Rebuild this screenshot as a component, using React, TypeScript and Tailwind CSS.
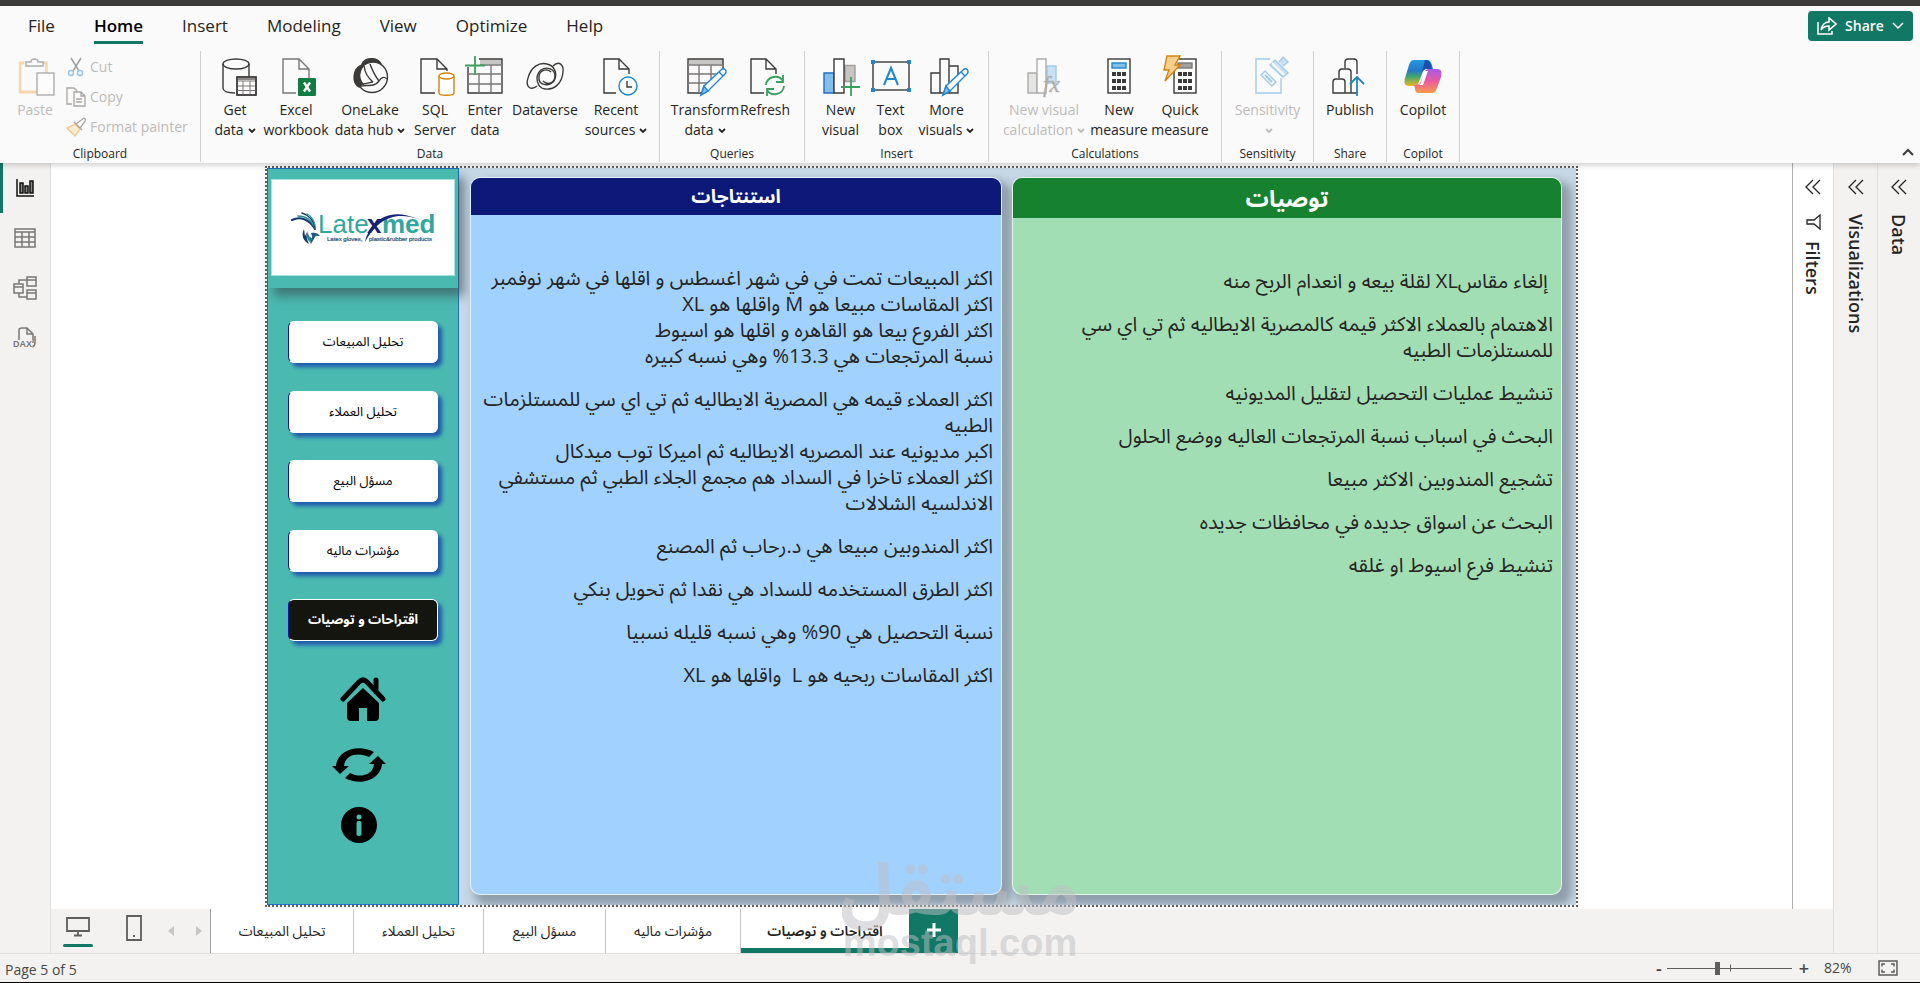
import type { ReactNode } from "react";
import { clsx } from "clsx";

const INK = "#3b3a39";
const BLUE = "#2086cf";
const GREEN = "#38a05c";

/* ---------- Ribbon icons ---------- */

function Icon({ children, faded = false }: { children: ReactNode; faded?: boolean }) {
    return (
        <svg
            viewBox="0 0 40 40"
            className={clsx("h-10 w-10 shrink-0 overflow-visible", faded && "opacity-40")}
            fill="none"
            stroke={INK}
            strokeWidth="1.4"
            aria-hidden="true"
        >
            {children}
        </svg>
    );
}

function Pencil() {
    return (
        <g stroke={BLUE}>
            <path d="M16 39l3-9 17-16c3-3 7 1 4 4L23 35z" fill="#fafafa" />
            <path d="M16 39l3-9 4 5z" fill="#83beec" />
            <path d="M34 16l4 4" />
        </g>
    );
}

function Bars() {
    return <path d="M4 37V17h9v20zM13 37V3h9v34zM22 10h9v27h-9" />;
}

function CalcBody({ x = 9, tone = "#83beec", line = BLUE }: { x?: number; tone?: string; line?: string }) {
    return (
        <g transform={`translate(${x} 0)`}>
            <rect x="0" y="3" width="22" height="34" fill="#fff" />
            <rect x="4" y="7" width="14" height="5" fill={tone} stroke={line} />
            {[16, 23, 30].map((y) =>
                [4, 9, 14].map((cx) => (
                    <rect key={`${cx}-${y}`} x={cx} y={y} width="4" height="4" fill={INK} stroke="none" />
                )),
            )}
        </g>
    );
}

const icons = {
    getData: (
        <Icon>
            <path d="M20 37c-8 0-12-2-12-5V8M34 8v13" />
            <ellipse cx="21" cy="8" rx="13" ry="5" />
            <rect x="22" y="21" width="19" height="18" fill="#fff" />
            <path d="M22 22.500h19" stroke="#8a8886" strokeWidth="3" />
            <path d="M22 25h19M22 30h19M22 34.500h19M28 25v14M35 25v14" stroke="#797775" strokeWidth="1" />
            <rect x="22" y="21" width="19" height="18" />
        </Icon>
    ),
    excel: (
        <Icon>
            <path d="M20 37H7V3h16l10 10v9M23 3v10h10" stroke="#797775" />
            <rect x="22" y="22" width="18" height="18" rx="1" fill="#107c41" stroke="none" />
            <path d="M28 26.500l6 9M34 26.500l-6 9" stroke="#fff" strokeWidth="2.400" />
        </Icon>
    ),
    oneLake: (
        <Icon>
            <circle cx="22" cy="21" r="15.500" />
            <path d="M12 8C15 1 28 1 31 8c-5-3-13-3-18 2z" fill={INK} />
            <path d="M12 9C2 13 2 27 9 31c2-2 3-3 4-3-5-6-4-13 0-18z" fill={INK} />
            <path d="M14 10c1 7 4 12 9 16M20 8c3 8 5 12 9 17M9 31c7-4 14 2 20-6 3-5 6-4 8-2M13 28c4 0 7-2 10-2" />
        </Icon>
    ),
    sql: (
        <Icon>
            <path d="M20 37H6V3h16l10 10v2M22 3v10h10" />
            <g stroke="#d2830d">
                <path d="M24 20v17c0 3 15 3 15 0V20" fill="#fff" />
                <ellipse cx="31.500" cy="20" rx="7.500" ry="3" fill="#fff" />
            </g>
        </Icon>
    ),
    enter: (
        <Icon>
            <path d="M15 6h22" stroke="#c8c6c4" strokeWidth="5" />
            <path d="M3 11v26h34V3H14" />
            <path d="M15 9h22M3 18h34M3 28h34M14 17v20M26 9v28" stroke="#797775" />
            <path d="M10 0v19M0 9.500h20" stroke={GREEN} strokeWidth="1.800" />
        </Icon>
    ),
    dataverse: (
        <Icon>
            <path d="M28 10c6-6 11-1 10 6-1 12-9 18-18 17-8-1-11-13-4-19 6-4 14-1 14 6s-7 10-12 5" />
            <path d="M12 30c-6 5-12 1-9-8C6 11 14 6 22 8c9 2 11 12 6 18-5 5-15 3-14-5 0-7 8-9 12-5" />
        </Icon>
    ),
    recent: (
        <Icon>
            <path d="M20 37H8V3h15l10 10v5M23 3v10h10" />
            <circle cx="32" cy="30" r="9" stroke={BLUE} fill="#fff" />
            <path d="M31 25v6h5" />
        </Icon>
    ),
    transform: (
        <Icon>
            <path d="M4 6h34" stroke="#c8c6c4" strokeWidth="5" />
            <path d="M18 37H3V3h35v11" />
            <path d="M3 9h35M3 18h28M3 27h20M14 9v28M26 9v14" stroke="#797775" />
            <Pencil />
        </Icon>
    ),
    refresh: (
        <Icon>
            <path d="M19 37H6V3h15l10 10v5M21 3v10h10" />
            <g stroke={GREEN} strokeWidth="1.800">
                <path d="M21 29c1-9 13-11 17-4M38 19v7h-7" />
                <path d="M39 30c-1 9-13 11-17 4M22 40v-7h7" />
            </g>
        </Icon>
    ),
    newVisual: (
        <Icon>
            <path d="M24 9.500h10v16h-10z" fill="#c8c6c4" stroke="#a19f9d" />
            <path d="M3 17h10v20H3z" fill="#83beec" stroke="#1f6fbf" />
            <path d="M13 3h10v34H13z" fill="#fff" />
            <path d="M30 21v19M20 31h19" stroke={GREEN} strokeWidth="1.800" />
        </Icon>
    ),
    textBox: (
        <Icon>
            <rect x="2" y="6" width="36" height="28" />
            <g fill={BLUE} stroke="none">
                <path d="M0 4h4v4H0zM36 4h4v4h-4zM0 32h4v4H0zM36 32h4v4h-4z" />
            </g>
            <path d="M13 29l7-17 7 17M15.500 23h9" stroke={BLUE} strokeWidth="2" />
        </Icon>
    ),
    moreVisuals: (
        <Icon>
            <Bars />
            <Pencil />
        </Icon>
    ),
    newCalc: (
        <Icon faded>
            <path d="M23 10h9v17h-9z" fill="#83beec" stroke={BLUE} />
            <path d="M4 17h9v20H4z" fill="#c8c6c4" />
            <path d="M13 3h9v34h-9z" fill="#fff" />
            <text x="19" y="36" fontSize="23" fontStyle="italic" fontFamily="Liberation Serif" fill={INK} strokeWidth=".4">
                fx
            </text>
        </Icon>
    ),
    newMeasure: (
        <Icon>
            <CalcBody />
        </Icon>
    ),
    quick: (
        <Icon>
            <CalcBody x={14} tone="#a19f9d" line="#797775" />
            <path d="M7 0h13l-5 9h5L5 25l4-11H4z" fill="#fbcf8e" stroke="#d2830d" />
        </Icon>
    ),
    sensitivity: (
        <Icon faded>
            <g stroke={BLUE}>
                <path d="M22 3H8v34h25V22" />
                <path d="M13 19l4-4 11 11-4 4z" />
                <path d="M17 19l7 7" strokeWidth="2" />
                <path d="M22 9l5-5 13 13-5 4zM31 6l4-5 5 5-5 4" fill="#83beec" />
                <path d="M24 7l12 12" stroke="#fff" strokeWidth="2" />
            </g>
        </Icon>
    ),
    publish: (
        <Icon>
            <path d="M27 37H3V26q0-3 3-3h6q3 0 3 3v11M9 22v-6q0-3 3-3h6q3 0 3 3v21M15 12V6q0-3 3-3h6q3 0 3 3v12" />
            <path d="M27 40V22M20 28l7-7 7 7" stroke="#1f84bd" strokeWidth="1.800" />
        </Icon>
    ),
    copilot: (
        <svg viewBox="0 0 40 40" className="h-10 w-10 shrink-0" aria-hidden="true">
            <defs>
                <linearGradient id="copilotCool" x1="0" y1="0" x2="0" y2="1">
                    <stop offset="0" stopColor="#1f9be0" />
                    <stop offset=".4" stopColor="#2678c9" />
                    <stop offset=".65" stopColor="#43a86b" />
                    <stop offset="1" stopColor="#f0b429" />
                </linearGradient>
                <linearGradient id="copilotWarm" x1="0" y1="0" x2="0" y2="1">
                    <stop offset="0" stopColor="#a45be8" />
                    <stop offset=".5" stopColor="#ea5aa0" />
                    <stop offset="1" stopColor="#f79b4b" />
                </linearGradient>
            </defs>
            <path d="M11 4h13c3 0 4 2 5 5l1 4h-6c-3 0-4 2-5 5l-3 8c-1 3-3 4-6 4H6c-5 0-5-4-4-8L6 9c1-3 2-5 5-5z" fill="url(#copilotCool)" />
            <path d="M22 4c4 0 5 2 6 5l1 4h-6c-2 0-3 1-4 3z" fill="#1d4fb0" />
            <path d="M29 37H16c-3 0-4-2-4-5l-1-3c4 0 6-1 7-4l3-8c1-3 3-4 5-4h8c5 0 5 4 4 8l-4 11c-1 3-2 5-5 5z" fill="url(#copilotWarm)" />
            <path d="M21 15h4l-5 14h-5c3 0 3-3 4-7z" fill="#fff" />
        </svg>
    ),
};

/* ---------- Ribbon ---------- */

function Caret() {
    return (
        <svg viewBox="0 0 8 6" className="ml-1 inline h-[6px] w-2" fill="none" stroke="currentColor" strokeWidth="1.800" aria-hidden="true">
            <path d="M1 1l3 3 3-3" />
        </svg>
    );
}

type ToolProps = {
    icon: ReactNode;
    lines: string[];
    width: string;
    caret?: boolean;
    disabled?: boolean;
};

function Tool({ icon, lines, width, caret = false, disabled = false }: ToolProps) {
    return (
        <button
            type="button"
            disabled={disabled}
            className={clsx("flex shrink-0 flex-col items-center", width, disabled ? "text-[#bebbb8]" : "text-[#252423]")}
        >
            {icon}
            <span className="mt-1 text-sm leading-5 whitespace-nowrap">
                {lines.map((line, i) => (
                    <span key={i} className="block">
                        {line}
                        {caret && i === lines.length - 1 && <Caret />}
                    </span>
                ))}
            </span>
        </button>
    );
}

function Group({ label, width, children }: { label: string; width: string; children: ReactNode }) {
    return (
        <section className={clsx("flex shrink-0 flex-col border-r border-[#d2d0ce]", width)}>
            <div className="flex min-h-0 flex-1 justify-center pt-[5px]">{children}</div>
            <h2 className="text-center text-xs leading-4 text-[#252423]">{label}</h2>
        </section>
    );
}

function ClipboardTools() {
    return (
        <div className="flex flex-1 items-start text-[#bebbb8]">
            <button type="button" disabled className="ml-3 flex w-[46px] flex-col items-center">
                <Icon faded>
                    <path d="M11 7H6v29h31V7h-5" stroke="#f0a13c" strokeWidth="3" transform="scale(.85 1)" />
                    <path d="M11 10V6h5c0-4 7-4 7 0h5v4z" fill="#fff" />
                    <rect x="22" y="17" width="17" height="22" fill="#fff" />
                </Icon>
                <span className="mt-1 text-sm leading-5">Paste</span>
            </button>
            <ul className="-mt-1 ml-2 flex flex-col text-sm leading-[30px]">
                <li>
                    <button type="button" disabled className="flex items-center gap-1">
                        <svg viewBox="0 0 20 20" className="h-5 w-5" fill="none" stroke="#a19f9d" strokeWidth="1.500" aria-hidden="true">
                            <path d="M5 1l8 13M15 1L7 14" />
                            <circle cx="5" cy="16" r="2.500" stroke="#9cc6e8" />
                            <circle cx="14" cy="16" r="2.500" stroke="#9cc6e8" />
                        </svg>
                        Cut
                    </button>
                </li>
                <li>
                    <button type="button" disabled className="flex items-center gap-1">
                        <svg viewBox="0 0 20 20" className="h-5 w-5" fill="none" stroke="#a8a6a4" strokeWidth="1.300" aria-hidden="true">
                            <path d="M6 17H1V1h7l3 3M8 5h7l4 4v10H8zM15 5v4h4M10 12h6M10 15h6" />
                        </svg>
                        Copy
                    </button>
                </li>
                <li>
                    <button type="button" disabled className="flex items-center gap-1 whitespace-nowrap">
                        <svg viewBox="0 0 20 20" className="h-5 w-5" fill="none" stroke="#a8a6a4" strokeWidth="1.300" aria-hidden="true">
                            <path d="M1 11l8-4 5 5-5 7z" fill="#fdebcf" stroke="#f2c48d" />
                            <path d="M8 5l8 8M10 7l8-6 2 2-6 8" />
                        </svg>
                        Format painter
                    </button>
                </li>
            </ul>
        </div>
    );
}

const menu = ["File", "Home", "Insert", "Modeling", "View", "Optimize", "Help"];

function Header() {
    return (
        <header className="relative z-10 bg-[#fafafa] shadow-[0_2px_6px_rgba(0,0,0,0.2)]">
            <div className="h-[6px] bg-[#3b3a39]" />
            <div className="flex h-[45px] items-start justify-between">
                <nav className="flex gap-[39px] pl-7">
                    {menu.map((item) => (
                        <a
                            key={item}
                            href="#"
                            className={clsx(
                                "flex h-[38px] items-center border-b-[3px] pt-1 text-[17px]",
                                item === "Home"
                                    ? "border-[#117865] font-semibold text-black"
                                    : "border-transparent text-[#252423]",
                            )}
                        >
                            {item}
                        </a>
                    ))}
                </nav>
                <button
                    type="button"
                    className="mt-[5px] mr-[7px] flex h-[30px] w-[105px] items-center justify-between rounded-[4px] bg-[#117865] px-[9px] text-sm font-semibold text-white"
                >
                    <svg viewBox="0 0 20 18" className="h-[18px] w-5" fill="none" stroke="currentColor" strokeWidth="1.500" aria-hidden="true">
                        <path d="M1 5v12h14v-3" />
                        <path d="M4 13c1-5 4-8 8-8V1l7 6-7 6V9c-4 0-6 1-8 4z" />
                    </svg>
                    Share
                    <svg viewBox="0 0 12 8" className="h-2 w-3" fill="none" stroke="currentColor" strokeWidth="1.500" aria-hidden="true">
                        <path d="M1 1l5 5 5-5" />
                    </svg>
                </button>
            </div>

            <div className="flex h-28 items-end justify-between">
                <div className="flex h-full pb-px">
                    <Group label="Clipboard" width="w-[201px]">
                        <ClipboardTools />
                    </Group>
                    <Group label="Data" width="w-[459px]">
                        <Tool icon={icons.getData} lines={["Get", "data"]} width="w-[52px]" caret />
                        <Tool icon={icons.excel} lines={["Excel", "workbook"]} width="w-[70px]" />
                        <Tool icon={icons.oneLake} lines={["OneLake", "data hub"]} width="w-[78px]" caret />
                        <Tool icon={icons.sql} lines={["SQL", "Server"]} width="w-[52px]" />
                        <Tool icon={icons.enter} lines={["Enter", "data"]} width="w-12" />
                        <Tool icon={icons.dataverse} lines={["Dataverse"]} width="w-[72px]" />
                        <Tool icon={icons.recent} lines={["Recent", "sources"]} width="w-[70px]" caret />
                    </Group>
                    <Group label="Queries" width="w-[145px]">
                        <Tool icon={icons.transform} lines={["Transform", "data"]} width="w-[66px]" caret />
                        <Tool icon={icons.refresh} lines={["Refresh"]} width="w-[54px]" />
                    </Group>
                    <Group label="Insert" width="w-[184px]">
                        <Tool icon={icons.newVisual} lines={["New", "visual"]} width="w-12" />
                        <Tool icon={icons.textBox} lines={["Text", "box"]} width="w-[52px]" />
                        <Tool icon={icons.moreVisuals} lines={["More", "visuals"]} width="w-[60px]" caret />
                    </Group>
                    <Group label="Calculations" width="w-[233px]">
                        <Tool icon={icons.newCalc} lines={["New visual", "calculation"]} width="w-[90px]" caret disabled />
                        <Tool icon={icons.newMeasure} lines={["New", "measure"]} width="w-[60px]" />
                        <Tool icon={icons.quick} lines={["Quick", "measure"]} width="w-[62px]" />
                    </Group>
                    <Group label="Sensitivity" width="w-[92px]">
                        <Tool icon={icons.sensitivity} lines={["Sensitivity", ""]} width="w-[70px]" caret disabled />
                    </Group>
                    <Group label="Share" width="w-[73px]">
                        <Tool icon={icons.publish} lines={["Publish"]} width="w-[60px]" />
                    </Group>
                    <Group label="Copilot" width="w-[73px]">
                        <Tool icon={icons.copilot} lines={["Copilot"]} width="w-[60px]" />
                    </Group>
                </div>
                <button type="button" aria-label="Collapse ribbon" className="mr-[6px] mb-[7px]">
                    <svg viewBox="0 0 12 8" className="h-2 w-3" fill="none" stroke={INK} strokeWidth="2" aria-hidden="true">
                        <path d="M1 7l5-5 5 5" />
                    </svg>
                </button>
            </div>
        </header>
    );
}

/* ---------- View rail ---------- */

const views: { label: string; drawing: ReactNode }[] = [
    {
        label: "Report view",
        drawing: (
            <g stroke="#111">
                <path d="M4 3v17h17" />
                <path d="M7 7h3v10H7zM12 10h3v7h-3zM17 5h3v12h-3z" fill="#8a8886" />
            </g>
        ),
    },
    {
        label: "Table view",
        drawing: <path d="M2 3h20v18H2zM2 6h20M2 11h20M2 16h20M9 6v15M16 6v15" />,
    },
    {
        label: "Model view",
        drawing: <path d="M1 8h9v9H1zM14 1h9v9h-9zM14 14h9v9h-9zM1 11h9M14 4h9M14 17h9M6 8V4h8M6 17v4h8" />,
    },
    {
        label: "DAX query view",
        drawing: (
            <>
                <path d="M6 14V4q0-2 3-2h5l6 6v9M14 2v6h6M22 10v7q0 3-3 4" />
                <text x="0" y="21" fontSize="9" fontWeight="bold" fontFamily="Liberation Sans" fill="#797775" stroke="#f3f2f1" strokeWidth="1" paintOrder="stroke">
                    DAX
                </text>
            </>
        ),
    },
];

function ViewRail() {
    return (
        <nav className="flex w-[51px] shrink-0 flex-col border-r border-[#e1dfdd] bg-[#f3f2f1]">
            {views.map((view, i) => (
                <a
                    key={view.label}
                    href="#"
                    aria-label={view.label}
                    className={clsx(
                        "flex h-[50px] items-center border-l-[3px] pl-[10px]",
                        i === 0 ? "border-[#117865]" : "border-transparent",
                    )}
                >
                    <svg viewBox="0 0 24 24" className="h-6 w-6 overflow-visible" fill="none" stroke="#797775" strokeWidth="1.500" aria-hidden="true">
                        {view.drawing}
                    </svg>
                </a>
            ))}
        </nav>
    );
}

/* ---------- Report page ---------- */

function Logo() {
    return (
        <svg viewBox="0 0 150 40" className="h-10 w-[150px]" role="img" aria-label="Latexmed">
            {/* feathers */}
            <g fill="none" strokeLinecap="round">
                <path d="M4 12C12 8 21 11 27 21" stroke="#163a70" strokeWidth="2" />
                <path d="M10 8c8 0 14 5 17 12" stroke="#2a8f9b" strokeWidth="1.500" />
                <path d="M14 5c7 2 12 8 13 14" stroke="#163a70" strokeWidth="1.500" />
                <path d="M19 6c4 2 7 6 8 11" stroke="#2aa198" strokeWidth="1.200" />
            </g>
            {/* hand */}
            <g>
                <path d="M16 21c-3 6-1 12 5 15-2-4-3-8-2-12l-2 4z" fill="#163a70" />
                <path d="M20 23c0 5 2 7 5 7l-3 4c-3-2-4-7-2-11z" fill="#1f7f8c" />
                <path d="M23 25c4-1 7 0 9 3-2 0-4-1-5 1l-4 7c-2-2 2-6 1-8z" fill="#1c5a80" />
            </g>
            <g fontFamily="Liberation Sans" fontSize="26">
                <text x="30" y="25" fill="#2fa79c">Late</text>
                <text x="79" y="25" fill="#14227a" fontWeight="bold">x</text>
                <text x="94" y="25" fill="#2fa79c" fontWeight="bold">med</text>
            </g>
            <path d="M77 34C81 16 98-3 130 11 104 2 88 14 77 34z" fill="#14227a" />
            <g fontFamily="Liberation Sans" fontSize="6" fill="#1c4f7a" stroke="#1c4f7a" strokeWidth=".2">
                <text x="39" y="33">Latex gloves,</text>
                <text x="81" y="33">plastic&amp;rubber products</text>
            </g>
        </svg>
    );
}

const reportLinks = ["تحليل المبيعات", "تحليل العملاء", "مسؤل البيع", "مؤشرات ماليه", "اقتراحات و توصيات"];

function ReportSidebar() {
    return (
        <aside className="flex w-[192px] shrink-0 flex-col items-center border border-[#1c70c4] bg-[#4abab1]">
            <div className="flex h-[119px] w-full justify-center pt-[10px] shadow-[6px_8px_10px_rgba(60,80,85,0.65)]">
                <div className="flex h-[97px] w-[184px] items-center justify-center border border-[#a6e3dc] bg-white">
                    <Logo />
                </div>
            </div>

            <nav className="mt-[33px] flex h-[320px] w-[150px] flex-col justify-between" dir="rtl">
                {reportLinks.map((link, i) => (
                    <a
                        key={link}
                        href="#"
                        className={clsx(
                            "flex h-[42px] items-center justify-center rounded-[6px] border border-white border-l-[#1414a0] text-[13px] shadow-[4px_4px_4px_#1f58ad]",
                            i === reportLinks.length - 1
                                ? "bg-[#15150f] font-bold text-white"
                                : "bg-white text-black",
                        )}
                    >
                        {link}
                    </a>
                ))}
            </nav>

            <div className="mt-[35px] flex flex-col items-center pr-2">
                <button type="button" aria-label="Home" className="ml-2">
                    <svg viewBox="0 0 46 46" className="h-[46px] w-[46px]" aria-hidden="true">
                        <path d="M3 23L19 6q4-4 8 0l16 17M36 16V4" fill="none" stroke="#000" strokeWidth="5" strokeLinecap="round" strokeLinejoin="round" />
                        <path d="M23 12l16 15v14q0 4-4 4h-8V32h-8v13h-8q-4 0-4-4V27z" />
                    </svg>
                </button>
                <button type="button" aria-label="Refresh" className="mt-[25px]">
                    <svg viewBox="0 0 54 36" className="h-9 w-[54px]" aria-hidden="true">
                        <path d="M4 19C5 4 25-4 42 5l-5 5C27 5 13 7 12 19h5l-9 8-8-8z" />
                        <path d="M50 17c-1 15-21 23-37 14l5-5c9 5 23 3 24-9h-5l9-8 8 8z" />
                    </svg>
                </button>
                <button type="button" aria-label="Information" className="mt-6">
                    <svg viewBox="0 0 36 36" className="h-9 w-9" aria-hidden="true">
                        <circle cx="18" cy="18" r="18" />
                        <circle cx="18" cy="10" r="2.500" fill="#4abab1" />
                        <rect x="15.500" y="14" width="5" height="15" rx="2" fill="#4abab1" />
                    </svg>
                </button>
            </div>
        </aside>
    );
}

const findings: string[][] = [
    [
        "اكثر المبيعات تمت في في شهر اغسطس و اقلها في شهر نوفمبر",
        "اكثر المقاسات مبيعا هو M واقلها هو XL",
        "اكثر الفروع بيعا هو القاهره و اقلها هو اسيوط",
        "نسبة المرتجعات هي 13.3% وهي نسبه كبيره",
    ],
    [
        "اكثر العملاء قيمه هي المصرية الايطاليه ثم تي اي سي للمستلزمات الطبيه",
        "اكبر مديونيه عند المصريه الايطاليه ثم اميركا توب ميدكال",
        "اكثر العملاء تاخرا في السداد هم مجمع الجلاء الطبي ثم مستشفي الاندلسيه الشلالات",
    ],
    ["اكثر المندوبين مبيعا هي د.رحاب ثم المصنع"],
    ["اكثر الطرق المستخدمه للسداد هي نقدا ثم تحويل بنكي"],
    ["نسبة التحصيل هي 90% وهي نسبه قليله نسبيا"],
    ["اكثر المقاسات ربحيه هو L \u00a0واقلها هو XL"],
];

const recommendations: string[][] = [
    ["\u00a0إلغاء مقاسXL لقلة بيعه و انعدام الربح منه"],
    ["الاهتمام بالعملاء الاكثر قيمه كالمصرية الايطاليه ثم تي اي سي للمستلزمات الطبيه"],
    ["تنشيط عمليات التحصيل لتقليل المديونيه"],
    ["البحث في اسباب نسبة المرتجعات العاليه ووضع الحلول"],
    ["تشجيع المندوبين الاكثر مبيعا"],
    ["البحث عن اسواق جديده في محافظات جديده"],
    ["تنشيط فرع اسيوط او غلقه"],
];

function TextCard({ title, blocks, card, head }: { title: string; blocks: string[][]; card: string; head: string }) {
    return (
        <article
            dir="rtl"
            className={clsx(
                "flex min-w-0 flex-col overflow-hidden rounded-[10px] border border-white/70 shadow-[7px_7px_8px_3px_rgba(100,112,124,0.55)]",
                card,
            )}
        >
            <h3 className={clsx("flex items-center justify-center font-bold text-white", head)}>{title}</h3>
            <div className="flex flex-col gap-[17px] px-2 pt-[50px] text-xl leading-[26px] text-[#252423]">
                {blocks.map((block) => (
                    <div key={block[0]}>
                        {block.map((line) => (
                            <p key={line}>{line}</p>
                        ))}
                    </div>
                ))}
            </div>
        </article>
    );
}

function ReportPage() {
    return (
        <div className="flex aspect-[1313/741] h-full border-2 border-dotted border-[#605e5c] bg-[#c6d8e6] bg-clip-padding shadow-[0_0_10px_rgba(0,0,0,0.06)]">
            <ReportSidebar />
            <div className="flex min-w-0 flex-1 gap-[10px] overflow-hidden pt-[9px] pr-[14px] pb-[10px] pl-[11px]">
                <TextCard title="استنتاجات" blocks={findings} card="flex-[532] bg-[#a0d1ff]" head="h-[37px] bg-[#0d1979] text-[19px]" />
                <TextCard title="توصيات" blocks={recommendations} card="flex-[550] bg-[#a2deb4]" head="h-10 bg-[#16812f] text-[23px]" />
            </div>
        </div>
    );
}

/* ---------- Side panes ---------- */

function SidePane({ label, className, icon }: { label: string; className: string; icon?: ReactNode }) {
    return (
        <section className={clsx("flex shrink-0 flex-col items-center border-l pt-4", className)}>
            <button type="button" aria-label={`Expand ${label}`}>
                <svg viewBox="0 0 16 16" className="h-4 w-4" fill="none" stroke="#252423" strokeWidth="1.300" aria-hidden="true">
                    <path d="M8 1L1 8l7 7M15 1L8 8l7 7" />
                </svg>
            </button>
            <h2 className="mt-[19px] flex items-center gap-[11px] text-lg leading-6 font-semibold text-[#252423] [writing-mode:vertical-rl]">
                {icon}
                {label}
            </h2>
        </section>
    );
}

function FunnelIcon() {
    return (
        <svg viewBox="0 0 16 16" className="h-4 w-4" fill="none" stroke="#252423" strokeWidth="1.300" aria-hidden="true">
            <path d="M15 1v14L9 10H2V6h7z" />
        </svg>
    );
}

/* ---------- Bottom bars ---------- */

const tabWidths = ["w-[143px]", "w-[130px]", "w-[122px]", "w-[135px]", "w-[168px]"];

function PageTabs() {
    return (
        <div className="flex h-11 bg-[#f3f2f1]">
            <div className="flex w-[160px] shrink-0 border-r border-[#a19f9d] pl-3">
                <button type="button" aria-label="Desktop layout" className="flex w-[30px] flex-col items-center pt-2">
                    <svg viewBox="0 0 24 20" className="h-5 w-6" fill="none" stroke="#605e5c" strokeWidth="1.800" aria-hidden="true">
                        <path d="M1 1h22v13H1zM12 14v4M8 18.500h8" />
                    </svg>
                    <span className="mt-[7px] h-[3px] w-[30px] rounded-full bg-[#117865]" />
                </button>
                <button type="button" aria-label="Mobile layout" className="ml-8 self-start pt-[6px]">
                    <svg viewBox="0 0 18 26" className="h-[26px] w-[18px]" fill="none" stroke="#605e5c" strokeWidth="1.800" aria-hidden="true">
                        <path d="M2 1h14v24H2zM8 21h2" />
                    </svg>
                </button>
                <button type="button" aria-label="Previous page" className="ml-[25px]">
                    <svg viewBox="0 0 6 10" className="h-[10px] w-[6px]" fill="#c8c6c4" aria-hidden="true">
                        <path d="M6 0v10L0 5z" />
                    </svg>
                </button>
                <button type="button" aria-label="Next page" className="ml-[22px]">
                    <svg viewBox="0 0 6 10" className="h-[10px] w-[6px]" fill="#c8c6c4" aria-hidden="true">
                        <path d="M0 0v10l6-5z" />
                    </svg>
                </button>
            </div>
            <nav className="flex">
                {reportLinks.map((page, i) => (
                    <a
                        key={page}
                        href="#"
                        dir="rtl"
                        className={clsx(
                            "flex items-center justify-center bg-white text-sm whitespace-nowrap text-[#252423]",
                            tabWidths[i],
                            i === reportLinks.length - 1
                                ? "border-b-[5px] border-[#117865] pt-[5px] font-semibold"
                                : "border-r border-[#c8c6c4]",
                        )}
                    >
                        {page}
                    </a>
                ))}
            </nav>
            <button type="button" aria-label="New page" className="flex w-[49px] justify-center bg-[#117865] pt-[14px]">
                <svg viewBox="0 0 14 14" className="h-[14px] w-[14px]" stroke="#fff" strokeWidth="3" aria-hidden="true">
                    <path d="M7 0v14M0 7h14" />
                </svg>
            </button>
        </div>
    );
}

function StatusBar() {
    return (
        <footer className="flex h-[30px] shrink-0 items-center justify-between border-t border-b border-t-[#e1dfdd] border-b-black bg-[#f3f2f1] text-sm text-[#484644]">
            <span className="pl-[5px] pt-1">Page 5 of 5</span>
            <div className="flex items-center pr-[22px]">
                <button type="button" aria-label="Zoom out" className="mr-[2px] w-3 text-lg leading-5 font-semibold">
                    -
                </button>
                <div className="relative flex w-[125px] items-center">
                    <input
                        type="range"
                        aria-label="Zoom level"
                        min={10}
                        max={190}
                        defaultValue={82}
                        className="h-px w-full appearance-none bg-[#605e5c] [&::-webkit-slider-thumb]:h-[13px] [&::-webkit-slider-thumb]:w-[5px] [&::-webkit-slider-thumb]:appearance-none [&::-webkit-slider-thumb]:bg-[#605e5c]"
                    />
                    <span className="pointer-events-none absolute top-1/2 left-1/2 h-[7px] w-px -translate-y-1/2 bg-[#605e5c]" />
                </div>
                <button type="button" aria-label="Zoom in" className="ml-[6px] w-3 text-lg leading-5 font-semibold">
                    +
                </button>
                <span className="ml-[14px] w-[30px]">82%</span>
                <button type="button" aria-label="Fit to page" className="ml-6">
                    <svg viewBox="0 0 20 16" className="h-4 w-5" fill="none" stroke="#605e5c" strokeWidth="1.500" aria-hidden="true">
                        <path d="M1 1h18v14H1zM4 6.500V4h3M13 4h3v2.500M16 9.500V12h-3M7 12H4V9.500" />
                    </svg>
                </button>
            </div>
        </footer>
    );
}

function Watermark() {
    return (
        <div
            aria-hidden="true"
            className="pointer-events-none absolute bottom-[22px] left-1/2 z-20 flex -translate-x-1/2 flex-col items-center font-bold text-[#bfbfc3] opacity-50"
        >
            <span className="text-[72px] leading-[76px]">مستقل</span>
            <span className="font-['Liberation_Sans',sans-serif] text-[38px] leading-9">mostaql.com</span>
        </div>
    );
}

export default function App() {
    return (
        <div className="relative flex h-screen flex-col overflow-hidden bg-white font-['Open_Sans','Noto_Sans_Arabic','DejaVu_Sans',sans-serif]">
            <Header />
            <div className="flex min-h-0 flex-1">
                <ViewRail />
                <div className="flex min-w-0 flex-1 flex-col">
                    <div className="flex min-h-0 flex-1">
                        <main className="flex min-w-0 flex-1 justify-center pt-[3px] pb-[2px]">
                            <ReportPage />
                        </main>
                        <SidePane label="Filters" className="w-[41px] border-[#b3b0ad] bg-white" icon={<FunnelIcon />} />
                    </div>
                    <PageTabs />
                </div>
                <SidePane label="Visualizations" className="w-11 border-[#e1dfdd] bg-[#f3f2f1]" />
                <SidePane label="Data" className="w-[43px] border-[#e1dfdd] bg-[#f3f2f1]" />
            </div>
            <StatusBar />
            <Watermark />
        </div>
    );
}
